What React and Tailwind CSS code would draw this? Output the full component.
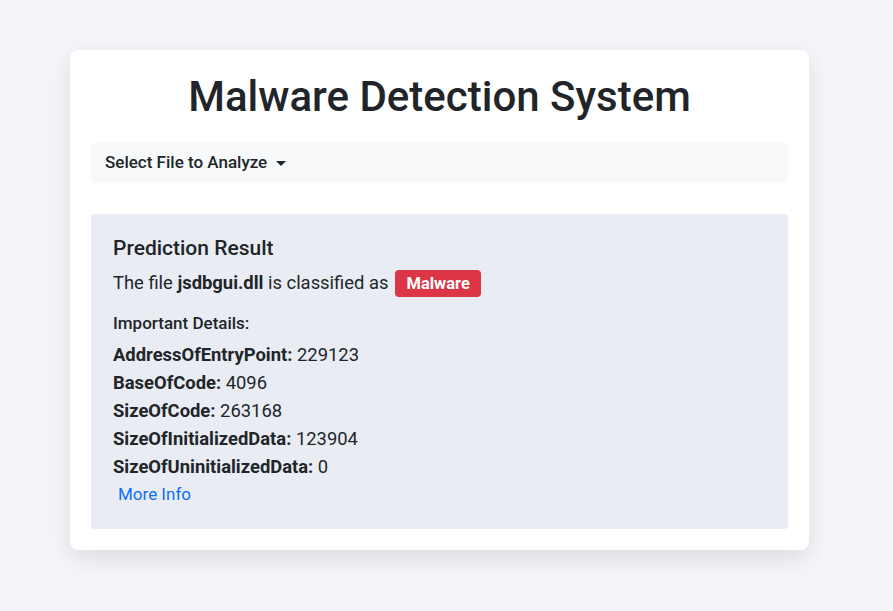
export default function App() {
  const details = [
    ["AddressOfEntryPoint", "229123"],
    ["BaseOfCode", "4096"],
    ["SizeOfCode", "263168"],
    ["SizeOfInitializedData", "123904"],
    ["SizeOfUninitializedData", "0"],
  ];

  return (
    <div className="min-h-screen bg-[#f4f5f9] pt-[50px] font-['Roboto',sans-serif] text-[#212529]">
      <div className="mx-[70px] w-[739px] rounded-lg bg-white px-[21px] pb-[21px] pt-[20px] shadow-[0_8px_24px_rgba(0,0,0,0.1)]">
        <h1 className="text-center text-[42px] font-medium leading-[54px]">Malware Detection System</h1>

        <nav className="mt-[19px] flex h-[40px] items-center rounded bg-[#f8f9fa] px-[14px]">
          <button className="flex items-center gap-[9px] text-[17px] font-medium text-[#212529]">
            Select File to Analyze
            <span className="inline-block h-0 w-0 border-x-[5px] border-t-[5px] border-x-transparent border-t-[#212529]" />
          </button>
        </nav>

        <div className="mt-[31px] rounded bg-[#e9edf3] px-[22px] pb-[22px] pt-[22px]">
          <h2 className="text-[21px] font-medium leading-[24px]">Prediction Result</h2>
          <p className="mt-[9px] flex items-center text-[18.4px] leading-[28px]">
            The file&nbsp;<strong className="font-bold">jsdbgui.dll</strong>&nbsp;is classified as
            <span className="ml-[7px] rounded bg-[#dc3545] px-[11px] py-[3px] text-[16.5px] font-bold leading-[21px] text-white">
              Malware
            </span>
          </p>
          <h3 className="mt-[14px] text-[17px] font-medium leading-[24px]">Important Details:</h3>
          <ul className="mt-[6px] text-[18.4px] leading-[28px]">
            {details.map(([k, v]) => (
              <li key={k}>
                <strong className="font-bold">{k}:</strong> {v}
              </li>
            ))}
          </ul>
          <a href="#" className="ml-[5px] text-[17px] leading-[26px] text-[#0d6efd]">
            More Info
          </a>
        </div>
      </div>
    </div>
  );
}
